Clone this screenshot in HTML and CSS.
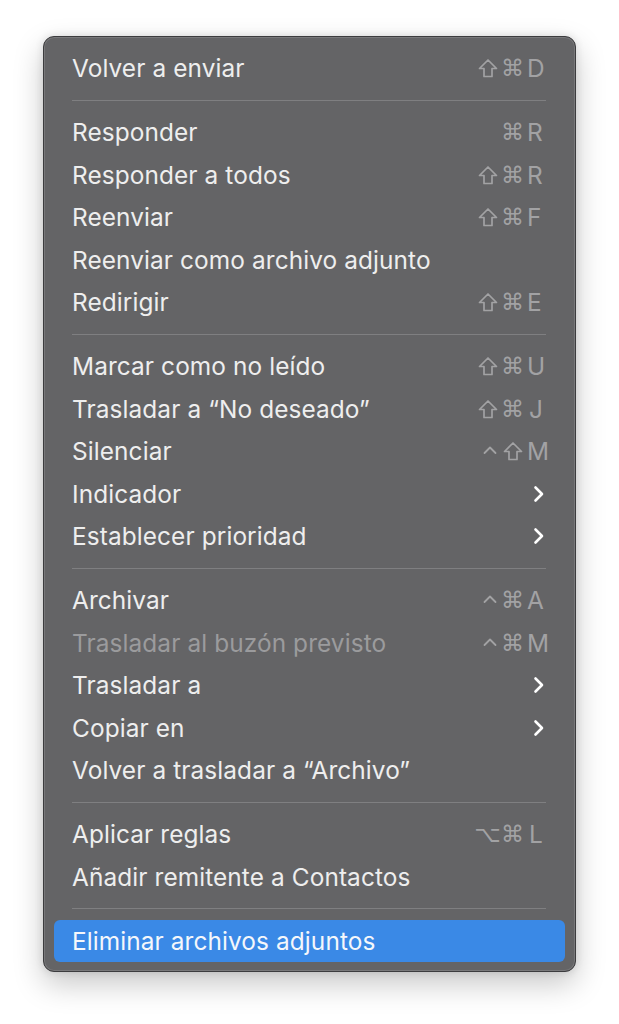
FILE: index.html
```html
<!DOCTYPE html>
<html lang="es">
<head>
<meta charset="utf-8">
<title>Menú</title>
<link rel="stylesheet" href="styles.css">
</head>
<body>
<div class="menu">
  <div class="item"><span class="label">Volver a enviar</span><span class="sc"><span class="mod"><svg class="shift" viewBox="0 0 20 20"><path d="M10 2 L18.5 10.5 L14 10.5 L14 18.5 L6 18.5 L6 10.5 L1.5 10.5 Z"/></svg></span><span class="mod">⌘</span><span class="key">D</span></span></div>
  <div class="sep"></div>
  <div class="item"><span class="label">Responder</span><span class="sc"><span class="mod">⌘</span><span class="key">R</span></span></div>
  <div class="item"><span class="label">Responder a todos</span><span class="sc"><span class="mod"><svg class="shift" viewBox="0 0 20 20"><path d="M10 2 L18.5 10.5 L14 10.5 L14 18.5 L6 18.5 L6 10.5 L1.5 10.5 Z"/></svg></span><span class="mod">⌘</span><span class="key">R</span></span></div>
  <div class="item"><span class="label">Reenviar</span><span class="sc"><span class="mod"><svg class="shift" viewBox="0 0 20 20"><path d="M10 2 L18.5 10.5 L14 10.5 L14 18.5 L6 18.5 L6 10.5 L1.5 10.5 Z"/></svg></span><span class="mod">⌘</span><span class="key">F</span></span></div>
  <div class="item"><span class="label">Reenviar como archivo adjunto</span></div>
  <div class="item"><span class="label">Redirigir</span><span class="sc"><span class="mod"><svg class="shift" viewBox="0 0 20 20"><path d="M10 2 L18.5 10.5 L14 10.5 L14 18.5 L6 18.5 L6 10.5 L1.5 10.5 Z"/></svg></span><span class="mod">⌘</span><span class="key">E</span></span></div>
  <div class="sep"></div>
  <div class="item"><span class="label">Marcar como no leído</span><span class="sc"><span class="mod"><svg class="shift" viewBox="0 0 20 20"><path d="M10 2 L18.5 10.5 L14 10.5 L14 18.5 L6 18.5 L6 10.5 L1.5 10.5 Z"/></svg></span><span class="mod">⌘</span><span class="key">U</span></span></div>
  <div class="item"><span class="label">Trasladar a “No deseado”</span><span class="sc"><span class="mod"><svg class="shift" viewBox="0 0 20 20"><path d="M10 2 L18.5 10.5 L14 10.5 L14 18.5 L6 18.5 L6 10.5 L1.5 10.5 Z"/></svg></span><span class="mod">⌘</span><span class="key key-j">J</span></span></div>
  <div class="item"><span class="label">Silenciar</span><span class="sc"><span class="mod ctrl"><svg class="caret" viewBox="0 0 14 10"><path d="M1.5 8 L7 2.5 L12.5 8"/></svg></span><span class="mod"><svg class="shift" viewBox="0 0 20 20"><path d="M10 2 L18.5 10.5 L14 10.5 L14 18.5 L6 18.5 L6 10.5 L1.5 10.5 Z"/></svg></span><span class="key">M</span></span></div>
  <div class="item"><span class="label">Indicador</span><svg class="chev" viewBox="0 0 12 18"><path d="M2.5 2.5 L9 9 L2.5 15.5"/></svg></div>
  <div class="item"><span class="label">Establecer prioridad</span><svg class="chev" viewBox="0 0 12 18"><path d="M2.5 2.5 L9 9 L2.5 15.5"/></svg></div>
  <div class="sep"></div>
  <div class="item"><span class="label">Archivar</span><span class="sc"><span class="mod ctrl"><svg class="caret" viewBox="0 0 14 10"><path d="M1.5 8 L7 2.5 L12.5 8"/></svg></span><span class="mod">⌘</span><span class="key">A</span></span></div>
  <div class="item disabled"><span class="label">Trasladar al buzón previsto</span><span class="sc"><span class="mod ctrl"><svg class="caret" viewBox="0 0 14 10"><path d="M1.5 8 L7 2.5 L12.5 8"/></svg></span><span class="mod">⌘</span><span class="key">M</span></span></div>
  <div class="item"><span class="label">Trasladar a</span><svg class="chev" viewBox="0 0 12 18"><path d="M2.5 2.5 L9 9 L2.5 15.5"/></svg></div>
  <div class="item"><span class="label">Copiar en</span><svg class="chev" viewBox="0 0 12 18"><path d="M2.5 2.5 L9 9 L2.5 15.5"/></svg></div>
  <div class="item"><span class="label">Volver a trasladar a “Archivo”</span></div>
  <div class="sep"></div>
  <div class="item"><span class="label">Aplicar reglas</span><span class="sc"><span class="mod">⌥</span><span class="mod">⌘</span><span class="key key-l">L</span></span></div>
  <div class="item"><span class="label">Añadir remitente a Contactos</span></div>
  <div class="sep"></div>
  <div class="item active"><span class="label">Eliminar archivos adjuntos</span></div>
</div>
</body>
</html>
```
FILE: styles.css
```css
html, body {
  margin: 0;
  padding: 0;
  background: #ffffff;
}
body {
  width: 619px;
  height: 1024px;
  padding: 36px 0 0 43px;
  box-sizing: border-box;
  font-family: Inter, "Liberation Sans", sans-serif;
}
.menu {
  width: 533px;
  box-sizing: border-box;
  background: #646466;
  border: 1px solid #3c3c3e;
  border-radius: 11px;
  box-shadow: inset 0 0 0 1px #78787a, 0 12px 30px rgba(0,0,0,0.22), 0 0 8px rgba(0,0,0,0.12);
  padding: 10px 10px 9px;
  display: flex;
  flex-direction: column;
}
.item {
  height: 42.5px;
  display: flex;
  align-items: center;
  justify-content: space-between;
  padding: 0 19px 0 18px;
  border-radius: 6px;
  color: #eeeeee;
  font-size: 24.4px;
  letter-spacing: 0.1px;
}
.item.disabled {
  color: #9b9b9d;
}
.item.active {
  background: #3a89e6;
  color: #f4f7fb;
}
.sep {
  height: 21.5px;
  display: flex;
  align-items: center;
  padding: 0 19px 0 18px;
}
.sep::before {
  content: "";
  flex: 1;
  height: 1px;
  background: #7f7f81;
}
.sc {
  display: flex;
  align-items: center;
  color: #a2a2a4;
  font-size: 24.4px;
}
.mod {
  width: 25px;
  display: flex;
  justify-content: center;
  align-items: center;
  font-family: "DejaVu Sans", sans-serif;
  font-size: 23px;
}
.mod.ctrl {
  width: 21px;
  align-self: flex-start;
  padding-top: 9px;
}
.caret {
  width: 14px;
  height: 10px;
}
.caret path {
  fill: none;
  stroke: #a2a2a4;
  stroke-width: 1.8;
  stroke-linecap: round;
  stroke-linejoin: round;
}
.shift {
  width: 20px;
  height: 20px;
}
.shift path {
  fill: none;
  stroke: #a2a2a4;
  stroke-width: 1.7;
  stroke-linejoin: round;
}
.key {
  width: 19px;
  padding-left: 2px;
  text-align: left;
  font-family: Inter, "Liberation Sans", sans-serif;
}
.key-j, .key-l {
  padding-left: 4px;
  width: 17px;
}
.chev {
  width: 12px;
  height: 18px;
  margin-right: 1px;
}
.chev path {
  fill: none;
  stroke: #ffffff;
  stroke-width: 2.6;
  stroke-linecap: round;
  stroke-linejoin: round;
}
```
